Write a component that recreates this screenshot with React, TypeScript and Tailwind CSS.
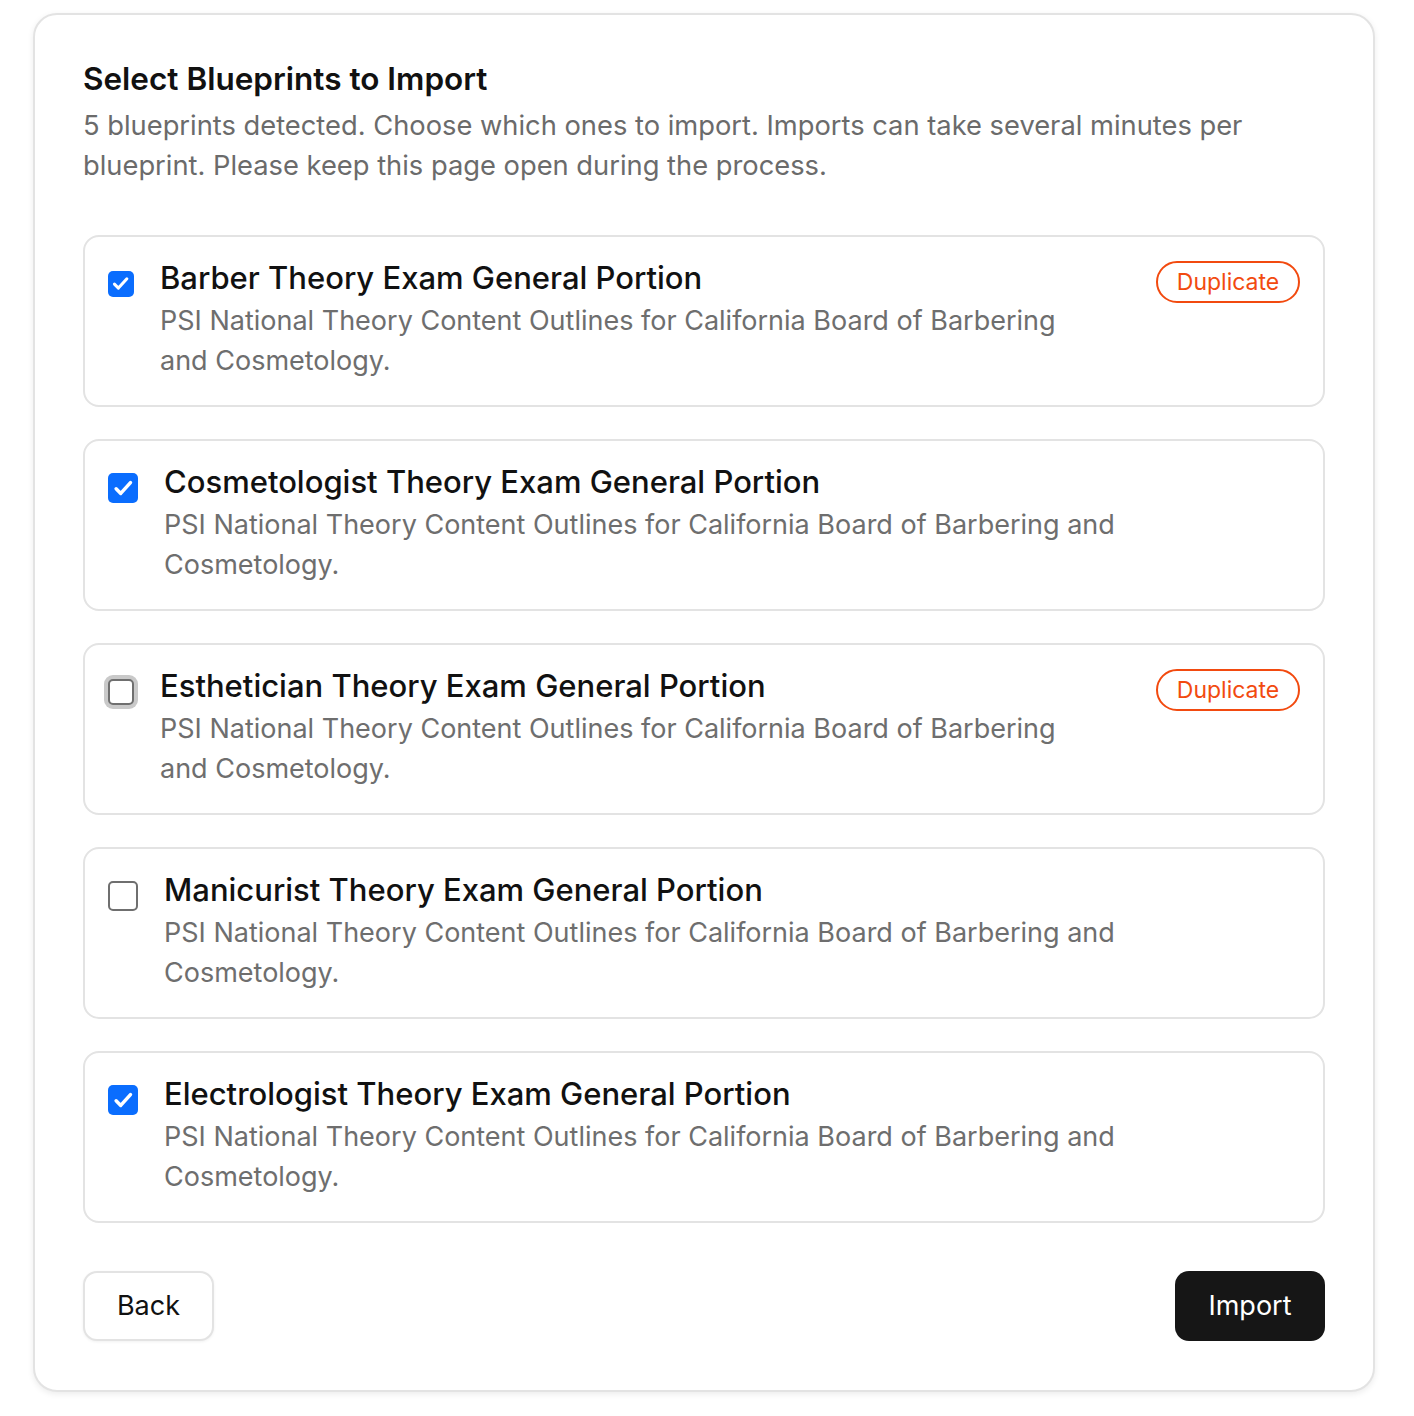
import React from 'react';

type Blueprint = {
  title: string;
  checked: boolean;
  duplicate: boolean;
  focused?: boolean;
};

const blueprints: Blueprint[] = [
  { title: 'Barber Theory Exam General Portion', checked: true, duplicate: true },
  { title: 'Cosmetologist Theory Exam General Portion', checked: true, duplicate: false },
  { title: 'Esthetician Theory Exam General Portion', checked: false, duplicate: true, focused: true },
  { title: 'Manicurist Theory Exam General Portion', checked: false, duplicate: false },
  { title: 'Electrologist Theory Exam General Portion', checked: true, duplicate: false },
];

function Checkbox({ checked, small, focused }: { checked: boolean; small: boolean; focused?: boolean }) {
  const size = small ? 'size-[26px] mt-[14px]' : 'size-[30px] mt-[12px]';
  if (checked) {
    return (
      <div className={`${size} shrink-0 rounded-[5px] bg-[#0a6dfe] flex items-center justify-center`}>
        <svg viewBox="0 0 24 24" className="size-[82%]" fill="none" stroke="white" strokeWidth={3.4} strokeLinecap="round" strokeLinejoin="round">
          <path d="M5 12.5l4.5 4.5L19 6.5" />
        </svg>
      </div>
    );
  }
  return (
    <div className={`${size} shrink-0 rounded-[5px] border-2 border-[#6f6f6f] bg-white ${focused ? 'ring-[4px] ring-[#c9c9c9]' : ''}`} />
  );
}

export default function App() {
  return (
    <div className="min-h-screen bg-white pt-[13px] pl-[33px]" style={{ fontFamily: 'Inter, "Noto Sans", sans-serif' }}>
      <div className="w-[1342px] rounded-[24px] border-2 border-[#e3e3e3] bg-white px-[48px] pt-[46px] pb-[49px] shadow-[0_2px_6px_rgba(0,0,0,0.08)]">
        <h1 className="text-[31.5px] font-semibold leading-[36px] text-[#111]">Select Blueprints to Import</h1>
        <p className="mt-[9px] text-[27.3px] leading-[40px] text-[#6b6b6b] max-w-[1190px]">
          5 blueprints detected. Choose which ones to import. Imports can take several minutes per blueprint. Please keep this page open during the process.
        </p>

        <div className="mt-[49px] flex flex-col gap-[32px]">
          {blueprints.map((b) => (
            <div key={b.title} className="flex items-start rounded-[16px] border-2 border-[#e3e3e3] px-[23px] pt-[20px] pb-[24px]">
              <Checkbox checked={b.checked} small={b.duplicate} focused={b.focused} />
              <div className={`ml-[26px] flex-1 ${b.duplicate ? 'max-w-[930px]' : 'max-w-[1000px]'}`}>
                <div className="text-[31px] font-medium leading-[42px] text-[#111]">{b.title}</div>
                <div className="mt-[2px] text-[27px] leading-[40px] text-[#6e6e6e]">
                  PSI National Theory Content Outlines for California Board of Barbering and Cosmetology.
                </div>
              </div>
              {b.duplicate && (
                <span className="ml-auto mt-[4px] flex h-[42px] w-[144px] shrink-0 items-center justify-center rounded-full border-2 border-[#f24a0f] text-[23px] text-[#f24a0f]">
                  Duplicate
                </span>
              )}
            </div>
          ))}
        </div>

        <div className="mt-[48px] flex items-center justify-between">
          <button className="h-[70px] w-[131px] rounded-[14px] border-2 border-[#e3e3e3] bg-white text-[27px] text-[#111] shadow-[0_1px_3px_rgba(0,0,0,0.06)]">
            Back
          </button>
          <button className="h-[70px] w-[150px] rounded-[14px] bg-[#161616] text-[27px] text-white">
            Import
          </button>
        </div>
      </div>
    </div>
  );
}
